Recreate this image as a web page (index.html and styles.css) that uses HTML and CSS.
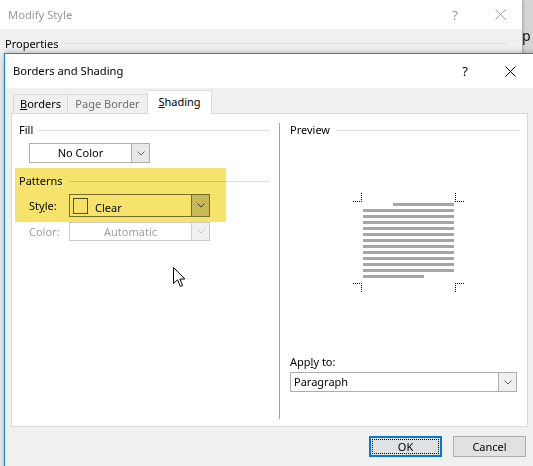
FILE: index.html
```html
<!DOCTYPE html>
<html lang="en">
<head>
    <meta charset="UTF-8">
    <title>Borders and Shading</title>
    <link rel="stylesheet" href="styles.css">
</head>
<body>
    <div class="desktop">
        <div class="edge-text">p</div>

        <!-- window behind: Modify Style -->
        <div class="window modify">
            <div class="titlebar">
                <span class="title">Modify Style</span>
                <span class="help">?</span>
                <span class="close">
                    <svg width="11" height="11" viewBox="0 0 11 11"><path d="M0.5 0.5 L10.5 10.5 M10.5 0.5 L0.5 10.5" stroke="#a0a0a0" stroke-width="1"/></svg>
                </span>
            </div>
            <div class="props">
                <span>Properties</span>
                <span class="rule"></span>
            </div>
        </div>

        <!-- front window: Borders and Shading -->
        <div class="window borders">
            <div class="titlebar">
                <span class="title">Borders and Shading</span>
                <span class="help">?</span>
                <span class="close">
                    <svg width="11" height="11" viewBox="0 0 11 11"><path d="M0.5 0.5 L10.5 10.5 M10.5 0.5 L0.5 10.5" stroke="#000" stroke-width="1"/></svg>
                </span>
            </div>

            <div class="dialog-body">
                <div class="tabs">
                    <div class="tab tab-borders"><u>B</u>orders</div>
                    <div class="tab tab-page">Page Border</div>
                    <div class="tab tab-shading active"><u>S</u>hading</div>
                </div>

                <div class="panel">
                    <div class="col-left">
                        <div class="group-head"><span>Fill</span><span class="rule"></span></div>
                        <div class="combo combo-fill">
                            <span class="value">No Color</span>
                            <span class="arrow">
                                <svg width="8" height="5" viewBox="0 0 8 5"><path d="M0.5 0.5 L4 4 L7.5 0.5" fill="none" stroke="#606060"/></svg>
                            </span>
                        </div>

                        <div class="group-head patterns"><span>Patterns</span><span class="rule"></span></div>
                        <div class="field-row">
                            <span class="field-label">St<u>y</u>le:</span>
                            <div class="combo combo-style">
                                <span class="swatch"></span>
                                <span class="value">Clear</span>
                                <span class="arrow">
                                    <svg width="8" height="5" viewBox="0 0 8 5"><path d="M0.5 0.5 L4 4 L7.5 0.5" fill="none" stroke="#404040"/></svg>
                                </span>
                            </div>
                        </div>
                        <div class="field-row row-color">
                            <span class="field-label disabled">Color:</span>
                            <div class="combo combo-color">
                                <span class="value">Automatic</span>
                                <span class="arrow">
                                    <svg width="8" height="5" viewBox="0 0 8 5"><path d="M0.5 0.5 L4 4 L7.5 0.5" fill="none" stroke="#c4c4c4"/></svg>
                                </span>
                            </div>
                        </div>

                        <div class="highlight"></div>
                    </div>

                    <div class="divider"></div>

                    <div class="col-right">
                        <div class="group-head"><span>Preview</span><span class="rule"></span></div>

                        <div class="preview">
                            <span class="corner tl"></span>
                            <span class="corner tr"></span>
                            <span class="corner bl"></span>
                            <span class="corner br"></span>
                            <div class="lines">
                                <span class="line first"></span>
                                <span class="line"></span>
                                <span class="line"></span>
                                <span class="line"></span>
                                <span class="line"></span>
                                <span class="line"></span>
                                <span class="line"></span>
                                <span class="line"></span>
                                <span class="line"></span>
                                <span class="line"></span>
                                <span class="line"></span>
                                <span class="line"></span>
                                <span class="line last"></span>
                            </div>
                        </div>

                        <div class="apply">
                            <div class="apply-label">App<u>l</u>y to:</div>
                            <div class="combo combo-apply">
                                <span class="value">Paragraph</span>
                                <span class="arrow">
                                    <svg width="8" height="5" viewBox="0 0 8 5"><path d="M0.5 0.5 L4 4 L7.5 0.5" fill="none" stroke="#606060"/></svg>
                                </span>
                            </div>
                        </div>
                    </div>
                </div>

                <div class="buttons">
                    <button class="btn btn-default"><span>OK</span></button>
                    <button class="btn">Cancel</button>
                </div>
            </div>
        </div>

        <!-- mouse pointer -->
        <svg class="cursor" width="13" height="21" viewBox="0 0 13 21">
            <path d="M0.5 0.5 L0.5 16.5 L4.5 12.8 L7.3 19.5 L9.6 18.5 L6.9 12 L11.8 12 Z" fill="#fff" stroke="#000" stroke-width="1" stroke-linejoin="miter"/>
        </svg>
    </div>
</body>
</html>
```

FILE: styles.css
```css
body {
    margin: 0;
    padding: 0;
    font-family: 'Noto Sans', 'Liberation Sans', sans-serif;
    font-size: 11px;
    color: #000;
    overflow: hidden;
}

.desktop {
    position: relative;
    width: 533px;
    height: 466px;
    background: #d6d6d6;
    overflow: hidden;
}

.edge-text {
    position: absolute;
    left: 522px;
    top: 26px;
    font-size: 14px;
    color: #111;
}

/* windows sit on the desktop */
.window {
    position: absolute;
    box-sizing: border-box;
    background: #f0f0f0;
}

.titlebar {
    display: flex;
    align-items: center;
    background: #fff;
}

.titlebar .title {
    flex: 1;
    font-size: 11.2px;
}

.titlebar .help,
.titlebar .close {
    width: 20px;
    display: flex;
    justify-content: center;
    align-items: center;
}

.titlebar .close {
    margin-left: 25px;
}

.modify {
    left: 0;
    top: 0;
    width: 522px;
    height: 466px;
    box-shadow: 1px 0 3px rgba(0, 0, 0, 0.25);
}

.modify .titlebar {
    height: 29px;
    padding: 0 12px 0 8px;
    color: #999;
}

.modify .help {
    font-size: 13px;
}

.props {
    display: flex;
    align-items: center;
    padding: 6px 15px 0 5px;
    height: 16px;
}

.rule {
    flex: 1;
    height: 1px;
    background: #dcdcdc;
    margin-left: 6px;
}

.borders {
    left: 4px;
    top: 53px;
    width: 545px;
    height: 430px;
    border: 1px solid #1883d7;
    box-shadow: 0 0 6px rgba(0, 0, 0, 0.3);
}

.borders .titlebar {
    height: 34px;
    padding: 0 28px 0 8px;
}

.borders .titlebar .title {
    padding-bottom: 2px;
}

.borders .help {
    font-size: 13px;
}

.dialog-body {
    padding: 3px 0 0 6px;
}

/* tabs */
.tabs {
    display: flex;
    align-items: flex-end;
    padding-left: 2px;
    height: 22px;
}

.tab {
    box-sizing: border-box;
    height: 19px;
    line-height: 18px;
    text-align: center;
    border: 1px solid #d9d9d9;
    border-bottom: none;
    background: #f0f0f0;
}

.tab-borders {
    width: 55px;
}

.tab-page {
    width: 80px;
    border-left: none;
    color: #707070;
}

.tab-shading {
    width: 64px;
}

.tab.active {
    background: #fff;
    position: relative;
    z-index: 1;
    margin-bottom: -1px;
    height: 24px;
    line-height: 22px;
    border-left: none;
}

/* tab page */
.panel {
    box-sizing: border-box;
    width: 517px;
    height: 314px;
    background: #fff;
    border: 1px solid #d9d9d9;
    display: flex;
}

.col-left {
    position: relative;
    width: 267px;
    padding: 8px 9px 0 7px;
    box-sizing: border-box;
}

.group-head {
    display: flex;
    align-items: center;
    height: 16px;
    line-height: 16px;
}

.combo {
    box-sizing: border-box;
    display: flex;
    border: 1px solid #adadad;
    background: #fff;
}

.combo .value {
    flex: 1;
    text-align: center;
}

.combo .arrow {
    width: 17px;
    border-left: 1px solid #adadad;
    background: #e8e8e8;
    display: flex;
    justify-content: center;
    align-items: center;
}

.combo-fill {
    margin: 5px 0 0 10px;
    width: 121px;
    height: 20px;
    line-height: 18px;
}

.patterns {
    margin-top: 10px;
}

.field-row {
    display: flex;
    align-items: center;
    padding-left: 10px;
    margin-top: 5px;
}

.field-label {
    width: 40px;
}

.disabled {
    color: #a0a0a0;
}

.combo-style {
    width: 141px;
    height: 23px;
    border-color: #7a7a7a;
    align-items: center;
}

.combo-style .swatch {
    width: 13px;
    height: 14px;
    border: 1px solid #555;
    margin-left: 3px;
}

.combo-style .value {
    text-align: left;
    padding-left: 7px;
    padding-top: 3px;
}

.combo-style .arrow {
    align-self: stretch;
    border-left-color: #7a7a7a;
    background: #cfcfcf;
}

.combo-color {
    width: 141px;
    height: 19px;
    line-height: 17px;
    border-color: #cccccc;
    color: #a0a0a0;
}

.combo-color .arrow {
    border-left-color: #cccccc;
    background: #f0f0f0;
}

.highlight {
    position: absolute;
    left: 3px;
    top: 54px;
    width: 211px;
    height: 54px;
    background: #f6e36c;
    mix-blend-mode: multiply;
}

.divider {
    width: 1px;
    background: #a0a0a0;
    margin: 9px 0 7px;
}

.col-right {
    flex: 1;
    display: flex;
    flex-direction: column;
    padding: 8px 8px 34px 10px;
}

/* preview drawing */
.preview {
    position: relative;
    width: 111px;
    height: 99px;
    margin: 55px 0 0 63px;
}

.corner {
    position: absolute;
    width: 8px;
    height: 8px;
    border: 0 dotted #000;
}

.corner.tl { left: 0; top: 0; border-right-width: 1px; border-bottom-width: 1px; }
.corner.tr { right: 0; top: 0; border-left-width: 1px; border-bottom-width: 1px; }
.corner.bl { left: 0; bottom: 0; border-right-width: 1px; border-top-width: 1px; }
.corner.br { right: 0; bottom: 0; border-left-width: 1px; border-top-width: 1px; }

.lines {
    position: absolute;
    left: 10px;
    top: 10px;
    width: 91px;
    display: flex;
    flex-direction: column;
    gap: 3px;
}

.line {
    height: 3px;
    background: #a6a6a6;
}

.line.first {
    margin-left: 30px;
}

.line.last {
    width: 61px;
}

.apply {
    margin-top: auto;
}

.apply-label {
    line-height: 16px;
}

.combo-apply {
    margin-top: 2px;
    width: 227px;
    height: 20px;
    line-height: 18px;
}

.combo-apply .value {
    text-align: left;
    padding-left: 3px;
}

.combo-apply .arrow {
    background: #f0f0f0;
}

/* buttons */
.buttons {
    display: flex;
    justify-content: flex-end;
    gap: 11px;
    width: 517px;
    box-sizing: border-box;
    padding-right: 2px;
    margin-top: 9px;
}

.btn {
    box-sizing: border-box;
    width: 73px;
    height: 21px;
    padding: 0;
    font-family: inherit;
    font-size: 11px;
    color: #000;
    background: #e1e1e1;
    border: 1px solid #adadad;
}

.btn-default {
    border: 2px solid #0078d7;
    padding: 1px;
}

.btn-default span {
    display: block;
    height: 100%;
    line-height: 13px;
    border: 1px dotted #000;
    box-sizing: border-box;
}

.cursor {
    position: absolute;
    left: 173px;
    top: 267px;
}
```
